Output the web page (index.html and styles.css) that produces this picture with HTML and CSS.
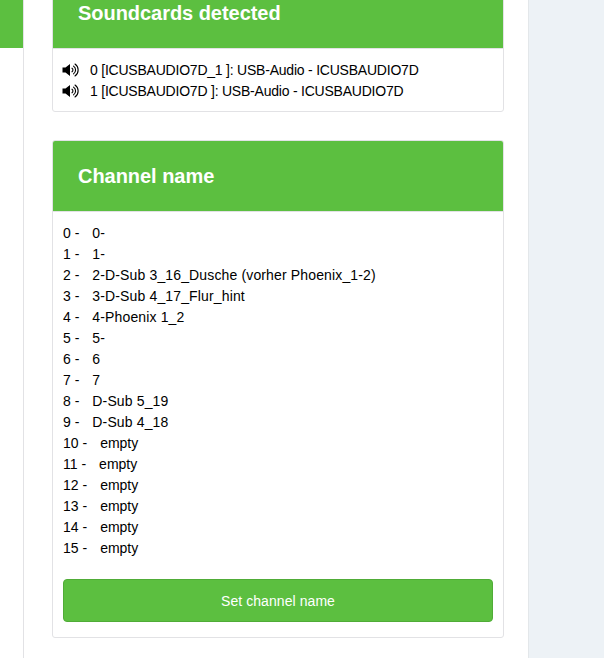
FILE: index.html
```html
<!DOCTYPE html>
<html lang="en">
<head>
    <meta charset="UTF-8">
    <meta name="viewport" content="width=device-width, initial-scale=1.0">
    <title>Channel name</title>
    <link rel="stylesheet" href="styles.css">
</head>
<body>
    <svg class="sprite" width="0" height="0">
        <symbol id="volume" viewBox="0 0 17 14">
            <path d="M.5 4.500h3L8 1v12L3.500 9.500h-3z" fill="currentColor"/>
            <path d="M10 5.200a2.200 2.200 0 0 1 0 3.600M11.500 3.100a4.700 4.700 0 0 1 0 7.800M13 1a7.300 7.300 0 0 1 0 12" fill="none" stroke="currentColor" stroke-width="1.100" stroke-linecap="round"/>
        </symbol>
    </svg>

    <main class="page">
        <div class="side-panel">
            <div class="side-header"></div>
        </div>

        <div class="column">
            <section class="card">
                <h2 class="card-header">Soundcards detected</h2>
                <div class="card-body">
                    <div class="row"><svg class="icon"><use href="#volume"/></svg><span class="device">0 [ICUSBAUDIO7D_1 ]: USB-Audio - ICUSBAUDIO7D</span></div>
                    <div class="row"><svg class="icon"><use href="#volume"/></svg><span class="device">1 [ICUSBAUDIO7D ]: USB-Audio - ICUSBAUDIO7D</span></div>
                </div>
            </section>

            <section class="card">
                <h2 class="card-header">Channel name</h2>
                <div class="card-body channels">
                    <div class="row">0 -<span class="name">0-</span></div>
                    <div class="row">1 -<span class="name">1-</span></div>
                    <div class="row">2 -<span class="name label">2-D-Sub 3_16_Dusche (vorher Phoenix_1-2)</span></div>
                    <div class="row">3 -<span class="name label">3-D-Sub 4_17_Flur_hint</span></div>
                    <div class="row">4 -<span class="name label">4-Phoenix 1_2</span></div>
                    <div class="row">5 -<span class="name">5-</span></div>
                    <div class="row">6 -<span class="name">6</span></div>
                    <div class="row">7 -<span class="name">7</span></div>
                    <div class="row">8 -<span class="name label">D-Sub 5_19</span></div>
                    <div class="row">9 -<span class="name label">D-Sub 4_18</span></div>
                    <div class="row">10 -<span class="name">empty</span></div>
                    <div class="row">11 -<span class="name">empty</span></div>
                    <div class="row">12 -<span class="name">empty</span></div>
                    <div class="row">13 -<span class="name">empty</span></div>
                    <div class="row">14 -<span class="name">empty</span></div>
                    <div class="row">15 -<span class="name">empty</span></div>
                    <button class="btn" type="button">Set channel name</button>
                </div>
            </section>
        </div>
    </main>
</body>
</html>
```

FILE: styles.css
```css
:root {
    --green: #5cbf40;
    --green-dark: #50ac37;
    --border: #e2e2e5;
}

* {
    box-sizing: border-box;
}

body {
    margin: 0;
    height: 658px;
    overflow: hidden;
    background: #edf2f6;
    color: #000;
    font: 14px/21px "Liberation Sans", Arial, sans-serif;
}

.sprite {
    display: none;
}

.page {
    display: flex;
    gap: 28px;
    width: 529px;
    height: 658px;
    background: #fff;
    border-right: 1px solid #e3e7ea;
}

/* Neighbouring panel */
.side-panel {
    width: 24px;
    border-right: 1px solid var(--border);
}

.side-header {
    height: 48px;
    background: var(--green);
}

/* Cards */
.column {
    width: 452px;
    margin-top: -23px;
}

.card {
    margin-bottom: 28px;
    border: 1px solid var(--border);
    border-radius: 3px;
    overflow: hidden;
}

.card-header {
    height: 71px;
    margin: 0;
    padding: 0 25px;
    border-bottom: 1px solid var(--border);
    background: var(--green);
    background-clip: padding-box;
    color: #fff;
    font-size: 20px;
    line-height: 70px;
    letter-spacing: -0.04px;
}

.card-body {
    padding: 11px 10px 9px;
}

.channels {
    padding: 11px 10px 15px;
}

.row {
    display: flex;
    height: 21px;
    white-space: nowrap;
}

.icon {
    width: 17px;
    height: 14px;
    margin: 3px 11px 0 -1px;
}

.device {
    letter-spacing: -0.22px;
}

.name {
    margin-left: 13px;
}

.label {
    letter-spacing: 0.14px;
}

.btn {
    display: block;
    width: 100%;
    height: 43px;
    margin-top: 20px;
    padding: 2px 0 0;
    border: 1px solid var(--green-dark);
    border-radius: 4px;
    background: var(--green);
    color: #fff;
    font: inherit;
    letter-spacing: 0.07px;
}
```
